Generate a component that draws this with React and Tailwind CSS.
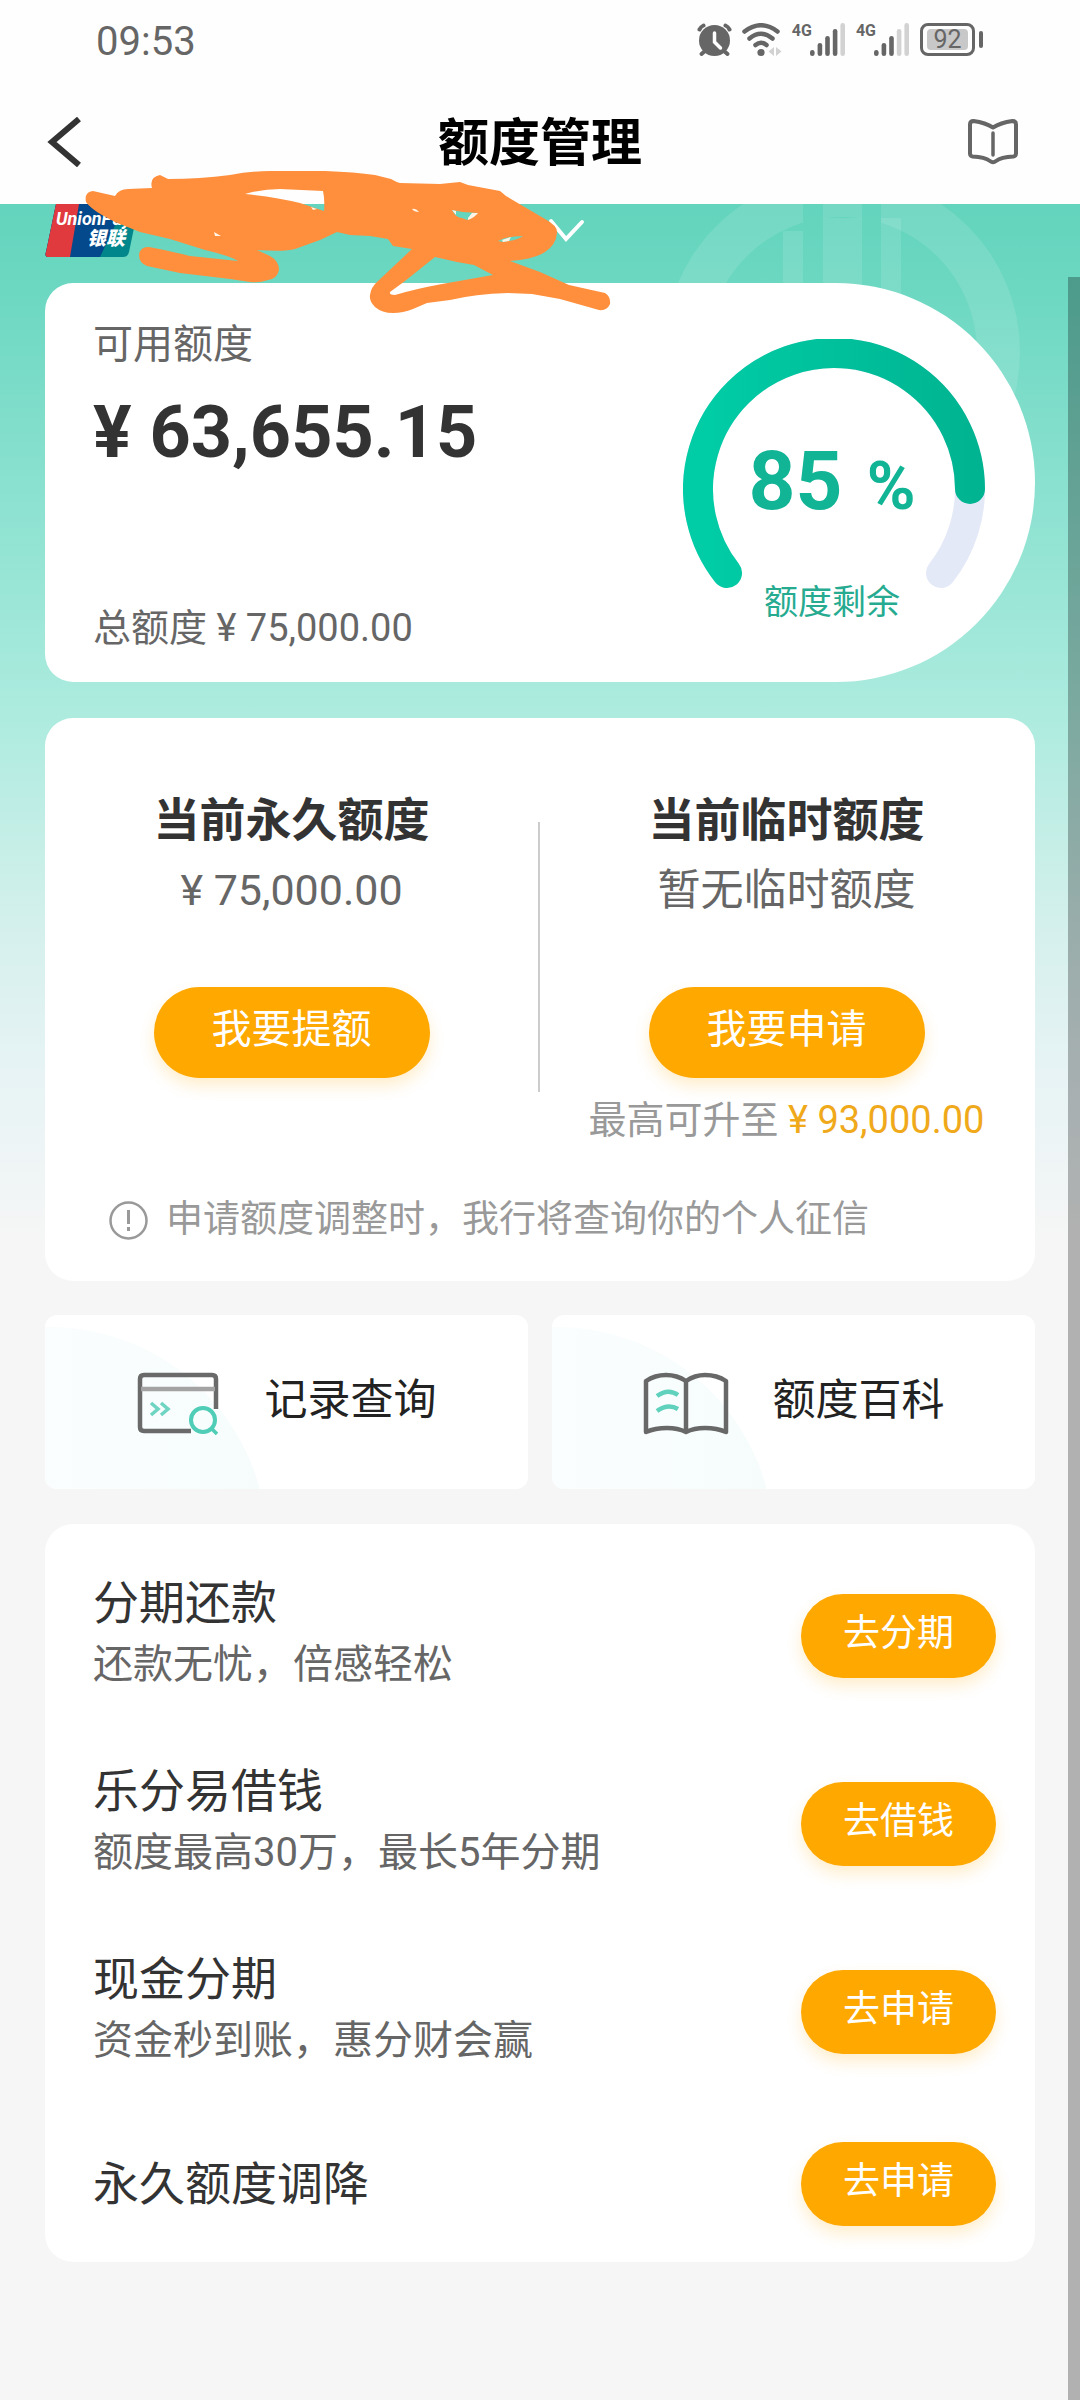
const PROMOS = [
  { title: "分期还款", note: "还款无忧，倍感轻松", action: "去分期" },
  { title: "乐分易借钱", note: "额度最高30万，最长5年分期", action: "去借钱" },
  { title: "现金分期", note: "资金秒到账，惠分财会赢", action: "去申请" },
];

function SignalBars({ active }) {
  const heights = [6, 13, 20, 27, 33];
  return (
    <div className="flex items-start">
      <span className="-mr-0.5 text-[16px] leading-[16px] font-bold">4G</span>
      <svg width="36" height="34" viewBox="0 0 36 34" aria-hidden="true">
        {heights.map((h, i) => (
          <rect
            key={h}
            x={i * 7.6}
            y={33 - h}
            width="4.6"
            height={h}
            rx="2.3"
            fill={i < active ? "#666" : "#d2d2d2"}
          />
        ))}
      </svg>
    </div>
  );
}

function StatusBar() {
  return (
    <div className="flex h-20 items-center justify-between pr-[97px] pl-[96px] text-[#666]">
      <time className="pt-1 text-[40px] leading-[48px]">09:53</time>
      <div className="flex h-[34px] items-start gap-[10px]">
        <svg width="35" height="34" viewBox="0 0 35 34" aria-hidden="true">
          <g stroke="#666" strokeWidth="4" strokeLinecap="round" fill="none">
            <path d="M2.5 6.500Q4 3.500 6.500 2.500M32.500 6.500Q31 3.500 28.500 2.500" />
            <path d="M8 28l-3.500 3M27 28l3.500 3" />
          </g>
          <circle cx="17.500" cy="17.500" r="15.500" fill="#666" />
          <path d="M17.500 10v9l6 6" stroke="#fff" strokeWidth="3.500" strokeLinecap="round" fill="none" />
        </svg>
        <svg width="40" height="34" viewBox="0 0 40 34" aria-hidden="true">
          <g stroke="#666" strokeWidth="4.500" strokeLinecap="round" fill="none">
            <path d="M2.500 8.500Q19 -4 35.500 8.500" />
            <path d="M7.500 15.500Q19 6 30.500 15.500" />
            <path d="M13.500 22Q19 17.500 24.500 22" />
          </g>
          <circle cx="19" cy="29.500" r="3.600" fill="#666" />
          <path d="M32 24v9l-5.500-4.500zM34 24v9l5.500-4.500z" fill="#d2d2d2" />
        </svg>
        <SignalBars active={4} />
        <SignalBars active={3} />
        <div className="flex items-center gap-1">
          <div className="flex h-[33px] w-[55px] items-center justify-center rounded-lg border-3 border-[#666]">
            <div className="flex h-[21px] w-[41px] items-center justify-center rounded-sm bg-[#c8c8c8] text-[25px] leading-[21px]">
              92
            </div>
          </div>
          <div className="h-[17px] w-1 rounded-sm bg-[#666]" />
        </div>
      </div>
    </div>
  );
}

function TitleBar() {
  return (
    <div className="grid h-[124px] grid-cols-[1fr_auto_1fr] items-center px-[47px]">
      <button type="button" aria-label="返回" className="justify-self-start">
        <svg width="36" height="50" viewBox="0 0 36 50" fill="none" stroke="#333" strokeWidth="6">
          <path d="M32 2L5 25l27 23" />
        </svg>
      </button>
      <h1 className="pt-1 text-[51px] leading-[64px] font-bold text-black">额度管理</h1>
      <button type="button" aria-label="使用说明" className="mr-[13px] justify-self-end">
        <svg width="54" height="48" viewBox="0 0 54 48" fill="none" stroke="#666" strokeWidth="4" strokeLinecap="round" strokeLinejoin="round">
          <path d="M27 9.500C34 5 41 3.800 46.500 3Q50 3 50 6.500V35.500Q50 38 47.500 38.500C39 39 34 40 30 43Q27 45.500 24 43C20 40 15 39 6.500 38.500Q4 38 4 35.500V6.500Q4 3 7.500 3C13 3.800 20 5 27 9.500Z" />
          <path d="M27 15v22" strokeWidth="3.500" />
        </svg>
      </button>
    </div>
  );
}

function UnionPayLogo() {
  return (
    <svg width="94" height="54" viewBox="0 0 94 54" role="img" aria-label="UnionPay 银联">
      <path d="M11 0H94L84 48Q83 53 78 53H4Q-1 53 1 48Z" fill="#00868b" />
      <path d="M11 0H80L55 53H4Q-1 53 1 48Z" fill="#04498b" />
      <path d="M11 0H34L25 53H4Q-1 53 1 48Z" fill="#e03a3e" />
      <text x="11" y="21" fill="#fff" fontSize="18" fontWeight="700" fontStyle="italic">UnionPay</text>
      <text x="42" y="41" fill="#fff" fontSize="19" fontWeight="900" fontStyle="italic">银联</text>
    </svg>
  );
}

function Watermark() {
  return (
    <svg className="absolute top-0 right-[60px]" width="356" height="326" viewBox="664 204 356 326" aria-hidden="true">
      <defs>
        <mask id="stripes">
          <rect x="660" y="200" width="364" height="334" fill="#fff" />
          <rect x="803" y="200" width="20" height="334" fill="#000" />
          <rect x="862" y="200" width="19" height="334" fill="#000" />
        </mask>
      </defs>
      <g mask="url(#stripes)" fill="#fff" fillOpacity="0.11">
        <path
          fillRule="evenodd"
          d="M842 174a178 178 0 1 1 0 356a178 178 0 1 1 0-356ZM842 217a135 135 0 1 0 0 270a135 135 0 1 0 0-270Z"
        />
        <path d="M783 231h20v200h-20zM823 218h39v250h-39zM881 218h20v200h-20z" />
      </g>
    </svg>
  );
}

function Scribble() {
  return (
    <svg className="pointer-events-none absolute top-[160px] left-20" width="540" height="160" viewBox="80 160 540 160" aria-hidden="true">
      <path
        fill="#ff8f3c"
        fillRule="evenodd"
        d="M86 202Q84 192 93 191L115 196Q119 189 128 189L152 188Q149 177 160 175L168 179Q200 179 230 175Q250 171 270 171L325 171Q355 172 375 175L391 179Q396 182 400 183L440 184L460 182L468 185L500 191L506 196L545 219Q558 226 557 233Q556 245 545 252Q535 259 510 261L540 272L569 285L605 293Q611 297 610 304Q607 311 599 310L560 299L532 294L508 293Q475 294 450 300L427 303L413 309Q403 313 393 313Q382 313 375 307Q369 301 370 295Q371 287 378 281L412 249L393 246L388 239L370 236L350 235L337 232L320 240L295 249Q285 252 257 250L270 256Q279 261 279 270Q277 279 268 280Q260 283 250 282L230 279L180 273L147 266Q139 263 139 255Q140 247 148 247Q157 248 190 256L238 261Q230 256 205 250L170 239L140 232L115 222L102 215Q90 208 86 202Z
        M245 194Q262 189 280 189L323 191Q325 200 324 211L300 203Q275 197 245 194Z
        M435 257L405 281L390 292Q389 295 395 295Q415 289 442 284L493 275L474 265Q455 262 435 257Z
        M452 210L463 212L478 213L467 220L462 218Q456 218 452 210Z
        M498 241Q508 236 523 236Q518 240 503 242Z"
      />
      <g fill="#fff4e6">
        <path d="M412 209q4-1 7 3q-5 0-7-3ZM452 210l4 1v4ZM468 218l4-5h6q-4 5-10 7ZM502 240l9-3-2 4-6 1ZM214 232l7 4h-6ZM311 207l6 2-4 1Z" />
      </g>
    </svg>
  );
}

function Gauge() {
  return (
    <div className="relative mt-14 mr-[50px] h-[290px] w-[302px]">
      <svg width="302" height="290" viewBox="0 0 302 290" fill="none" strokeWidth="30" strokeLinecap="round" aria-hidden="true">
        <defs>
          <linearGradient id="ring" x1="0" y1="0" x2="1" y2="0">
            <stop offset="0" stopColor="#00cda6" />
            <stop offset="1" stopColor="#00b491" />
          </linearGradient>
        </defs>
        <path d="M44 234A136 136 0 1 1 258 234" stroke="#e4e9f7" />
        <path d="M44 234A136 136 0 1 1 287 150" stroke="url(#ring)" />
      </svg>
      <div className="absolute inset-x-0 top-[94px] pr-1 text-center font-bold text-[#12b496]">
        <span className="text-[82px] leading-[96px]">85</span>
        <span className="ml-6 text-[66px] leading-[96px]">%</span>
      </div>
      <div className="absolute inset-x-0 top-[241px] pr-1 text-center text-[34px] leading-[44px] text-[#26ab91]">额度剩余</div>
    </div>
  );
}

function BalanceCard() {
  return (
    <section className="relative flex h-[399px] justify-between rounded-l-[28px] rounded-r-[200px] bg-white pl-12">
      <div className="flex flex-col pt-9">
        <div className="text-[40px] leading-[52px] text-[#666]">可用额度</div>
        <div className="mt-5 text-[72px] leading-[84px] font-bold text-[#333]">¥ 63,655.15</div>
        <div className="mt-auto mb-[30px] text-[38px] leading-[48px] text-[#666]">总额度 ¥ 75,000.00</div>
      </div>
      <Gauge />
    </section>
  );
}

function LimitColumn({ title, value, action, children }) {
  return (
    <div className="flex flex-1 flex-col items-center">
      <h2 className="text-[46px] leading-[60px] font-bold text-[#333]">{title}</h2>
      <div className="mt-2 text-[43px] leading-[64px] text-[#666]">{value}</div>
      <button type="button" className="mt-[65px] h-[91px] w-[276px] shrink-0 rounded-full bg-[#ffa800] pb-1.5 text-[40px] leading-[52px] text-white shadow-[0_8px_16px_rgba(255,168,0,0.2)]">
        {action}
      </button>
      {children}
    </div>
  );
}

function LimitsCard() {
  return (
    <section className="mt-9 h-[563px] rounded-[28px] bg-white pt-[72px]">
      <div className="flex h-[354px] pr-0.5">
        <LimitColumn title="当前永久额度" value="¥ 75,000.00" action="我要提额" />
        <div className="mt-8 h-[270px] w-0.5 bg-[#ccc]" />
        <LimitColumn title="当前临时额度" value="暂无临时额度" action="我要申请">
          <div className="mt-[18px] text-[38px] leading-[48px] whitespace-nowrap text-[#999]">
            最高可升至 <span className="text-[#efa91a]">¥ 93,000.00</span>
          </div>
        </LimitColumn>
      </div>
      <div className="mt-[52px] flex items-center gap-[18px] pl-16 text-[37px] leading-[48px] text-[#999]">
        <svg width="39" height="39" viewBox="0 0 39 39" fill="none" stroke="#999" strokeWidth="2.500" aria-hidden="true">
          <circle cx="19.500" cy="19.500" r="18" />
          <path d="M19.500 9v14M19.500 26v4" strokeWidth="3" />
        </svg>
        <p>申请额度调整时，我行将查询你的个人征信</p>
      </div>
    </section>
  );
}

function RecordIcon() {
  return (
    <svg width="84" height="64" viewBox="0 0 84 64" fill="none" aria-hidden="true">
      <path d="M54 59H7Q3 59 3 55V7Q3 3 7 3H75Q79 3 79 7V37" stroke="#6a6a6a" strokeWidth="4.500" />
      <path d="M4 17H78" stroke="#a3a3a3" strokeWidth="4.500" />
      <path d="M14 31l7 6-7 6M24 31l7 6-7 6" stroke="#6fd4c2" strokeWidth="3.500" />
      <circle cx="66" cy="48" r="12" stroke="#4fcdb6" strokeWidth="4" />
      <path d="M74 56l6 6" stroke="#4fcdb6" strokeWidth="3.500" />
    </svg>
  );
}

function BookIcon() {
  return (
    <svg width="86" height="64" viewBox="0 0 86 64" fill="none" strokeLinejoin="round" aria-hidden="true">
      <path d="M43 9Q34 3 23 3Q12 3 3 9V60Q12 56 24 56Q35 56 43 60Q51 56 62 56Q74 56 83 60V9Q74 3 62 3Q52 3 43 9ZM43 9V60" stroke="#686868" strokeWidth="4.500" />
      <path d="M14 24Q25 16 35 23M14 39Q25 31 35 37" stroke="#5fd1bc" strokeWidth="4.500" />
    </svg>
  );
}

function ShortcutTile({ icon, label }) {
  return (
    <button type="button" className="relative flex h-[174px] flex-1 items-center justify-center gap-11 overflow-hidden rounded-xl bg-white text-[43px] leading-[56px] text-[#222]">
      <span className="absolute -bottom-[274px] -left-[214px] size-[436px] rounded-full bg-gradient-to-r from-white to-[#f6fcfc]" />
      <span className="relative pt-1">{icon}</span>
      <span className="relative pb-1">{label}</span>
    </button>
  );
}

function PillButton({ children }) {
  return (
    <button type="button" className="h-[84px] w-[195px] rounded-full bg-[#ffa800] pb-1 text-[37px] leading-[48px] text-white shadow-[0_8px_16px_rgba(255,168,0,0.2)]">
      {children}
    </button>
  );
}

function PromoList() {
  return (
    <section className="mt-[35px] rounded-[28px] bg-white pt-[50px] pr-[39px] pb-9 pl-12">
      <ul className="flex flex-col gap-16">
        {PROMOS.map((item) => (
          <li key={item.title} className="flex items-center justify-between">
            <div>
              <h3 className="text-[46px] leading-[58px] text-[#333]">{item.title}</h3>
              <p className="text-[40px] leading-[66px] text-[#666]">{item.note}</p>
            </div>
            <PillButton>{item.action}</PillButton>
          </li>
        ))}
        <li className="flex items-center justify-between pt-1">
          <h3 className="text-[46px] leading-[58px] text-[#333]">永久额度调降</h3>
          <PillButton>去申请</PillButton>
        </li>
      </ul>
    </section>
  );
}

export default function App() {
  return (
    <div className="relative min-h-screen bg-[#f6f6f6] font-['Roboto','Noto_Sans_CJK_SC',sans-serif]">
      <header className="bg-[#fefefe]">
        <StatusBar />
        <TitleBar />
      </header>
      <main className="relative bg-[linear-gradient(to_bottom,#63d4bd_0px,#6dd8c2_90px,#abebde_500px,#d4f0ec_720px,#e6f3f4_860px,#f6f6f6_1040px)] px-[45px] pb-[137px]">
        <Watermark />
        <button type="button" aria-label="选择卡片" className="relative flex h-[79px] w-[540px] items-start justify-between">
          <UnionPayLogo />
          <svg className="mt-[14px]" width="37" height="26" viewBox="0 0 37 26" fill="none" stroke="#fff" strokeWidth="4" strokeLinecap="round" aria-hidden="true">
            <path d="M3 3l15 18L34 4" />
          </svg>
        </button>
        <BalanceCard />
        <LimitsCard />
        <div className="mt-[34px] flex gap-6">
          <ShortcutTile icon={<RecordIcon />} label="记录查询" />
          <ShortcutTile icon={<BookIcon />} label="额度百科" />
        </div>
        <PromoList />
      </main>
      <Scribble />
      <div className="absolute top-[277px] right-0 bottom-0 w-3 bg-black/28" />
    </div>
  );
}
